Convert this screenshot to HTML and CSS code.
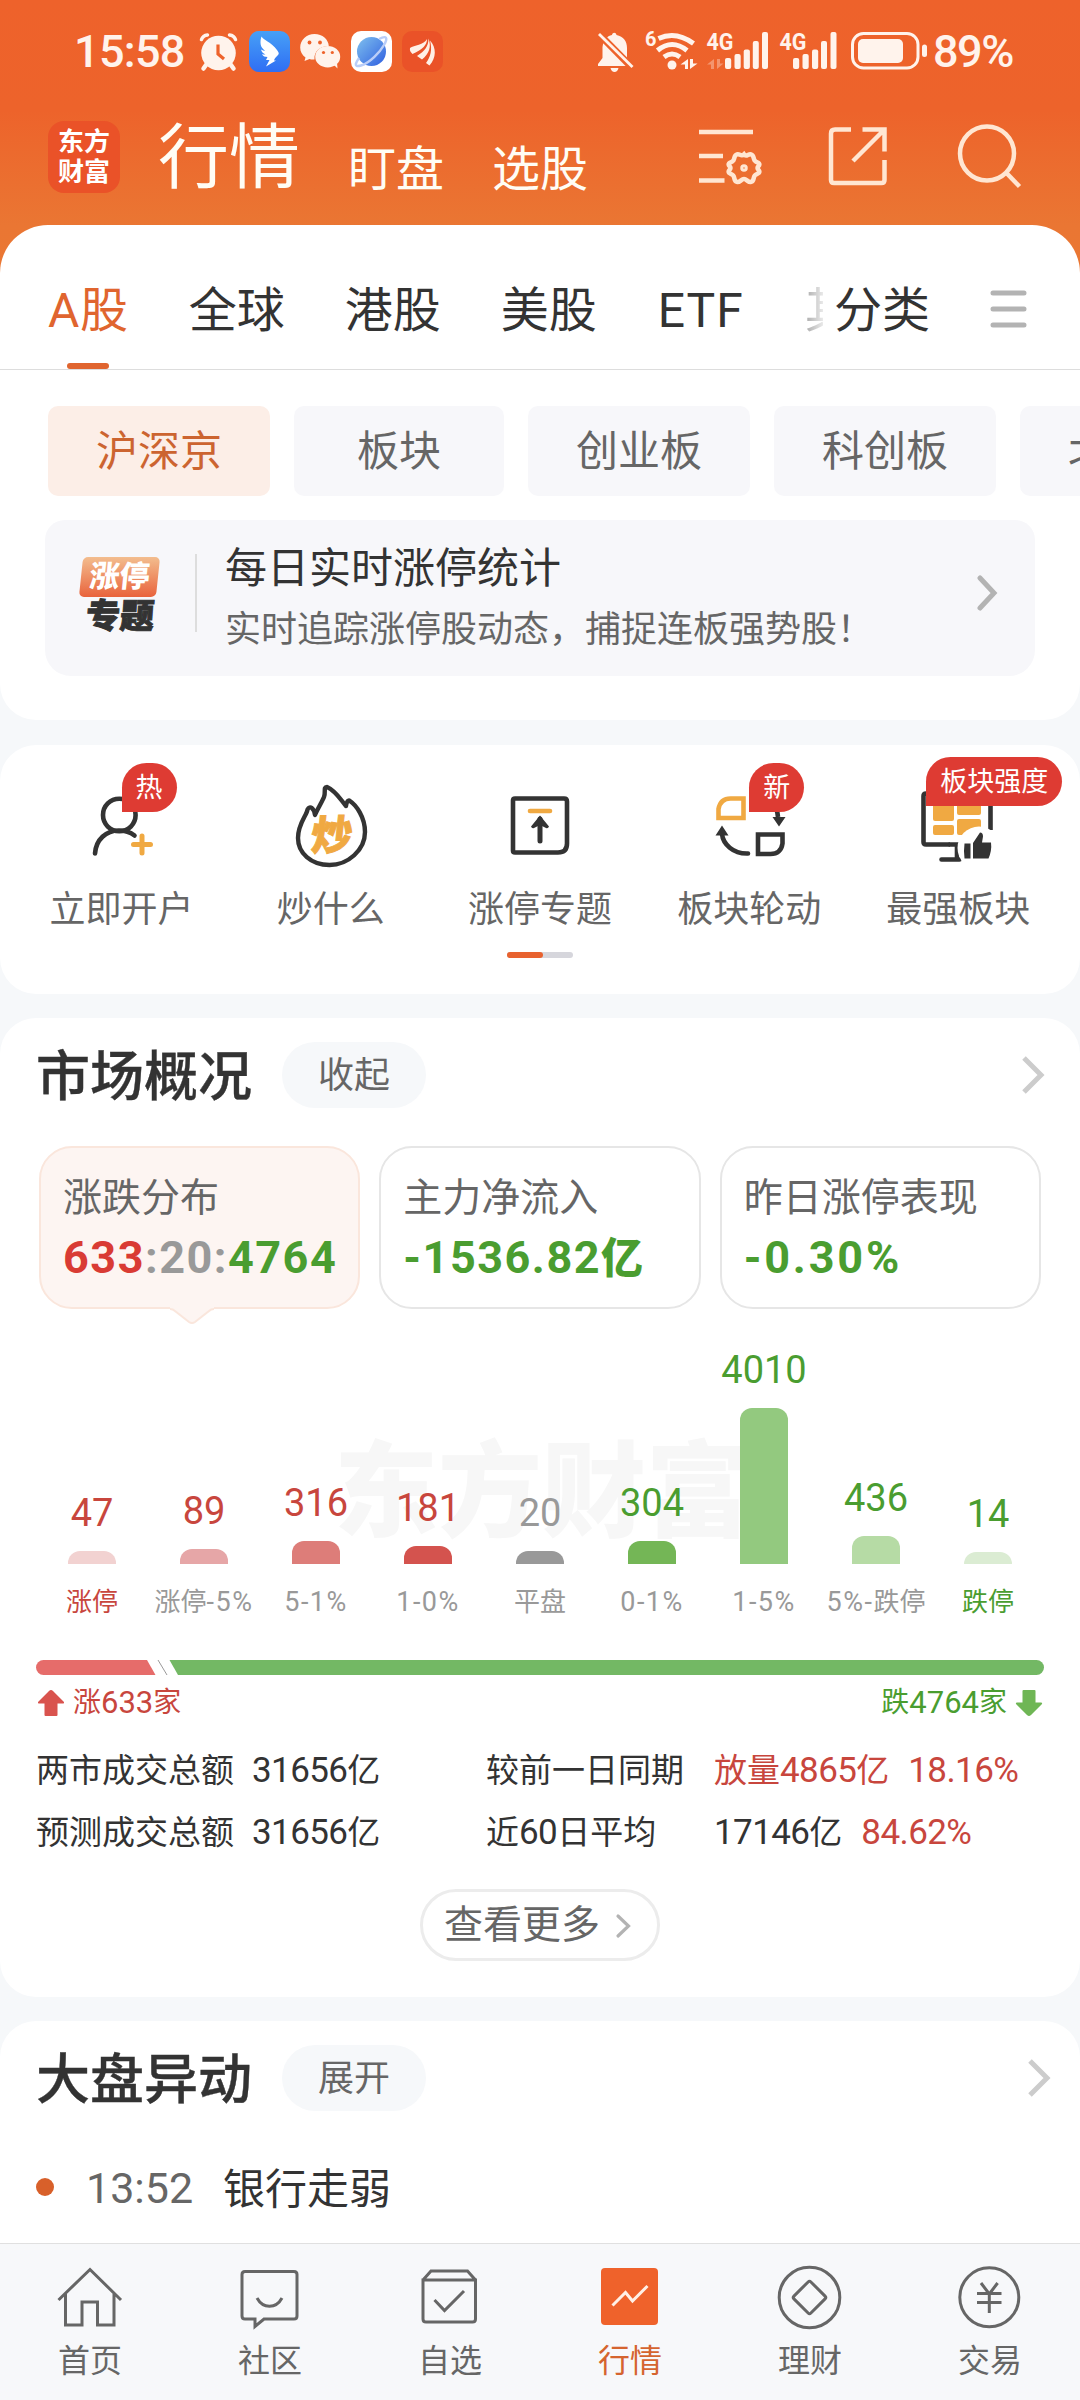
FILE: index.html
```html
<!DOCTYPE html>
<html lang="zh-CN">
<head>
<meta charset="utf-8">
<title>行情</title>
<link rel="stylesheet" href="styles.css">
</head>
<body>
<div class="page">
  <div class="status">
    <span class="clock">15:58</span>
    <div class="status-apps">
      <svg width="40" height="42" viewBox="199 31 40 42"><g stroke="#fff3ec" fill="none" stroke-linecap="round"><path d="M201.500 39.500q1.500-4 6-4.500M235.500 39.500q-1.500-4-6-4.500" stroke-width="3.500"/><path d="M206 65l-2.500 3.500M231 65l2.500 3.500" stroke-width="4.500"/></g><circle cx="218.500" cy="53" r="17.300" fill="#fff3ec"/><path d="M218 44.500v9.500l6 5" stroke="#ee622b" stroke-width="3.200" fill="none"/></svg>
      <svg width="41" height="41" viewBox="0 0 41 41"><defs><linearGradient id="ding" x2="0" y2="1"><stop stop-color="#47a0f6"/><stop offset="1" stop-color="#2f6ef4"/></linearGradient></defs><rect width="41" height="41" rx="10" fill="url(#ding)"/><path fill="#fff" d="M12.500 5.500c1 3 10 5.500 15.500 13.500 1.500 2.200 2.500 3.500 1 5-2 2-3.500 3.500-4 5.500h2L17 35.500l3.500-6.500h-3.500l1.500-3c-2.500 0-4.500-.6-5.500-3 1.500.8 3 .6 3.500.5-2.500-1-4-2.700-4.500-5 1.500 1 2.800 1.300 4 1.300-2.400-2-4-4-4.300-6.300-.4-2.500-.2-5.500.8-8z"/></svg>
      <svg width="41" height="41" viewBox="301 31 41 41"><path fill="#fff3ec" d="M315.500 34c8 0 14 5.500 14.300 12-9 0-15 5.500-14.300 13.500-2 .2-3.500 0-5-.5l-5 2 1-3.500c-3.500-2.500-5.300-6-5.300-10 0-7.500 6.300-13.500 14.300-13.500z"/><ellipse cx="328.700" cy="56.700" rx="12.500" ry="10.800" fill="#fff3ec"/><path d="M335 65l3.500 3.500-.5-6z" fill="#fff3ec"/><g fill="#ee622b"><circle cx="310.500" cy="42.500" r="1.900"/><circle cx="321" cy="42.500" r="1.900"/><circle cx="324.500" cy="52.500" r="1.600"/><circle cx="333.300" cy="52.500" r="1.600"/></g></svg>
      <svg width="41" height="41" viewBox="0 0 41 41"><defs><linearGradient id="globe" x2="1" y2="1"><stop stop-color="#7fc0ee"/><stop offset="1" stop-color="#2f5fe0"/></linearGradient></defs><rect width="41" height="41" rx="10" fill="#fff"/><circle cx="20.500" cy="20.500" r="14.500" fill="url(#globe)"/><path d="M28 8c8-4 9-1 5 6S19 32 10 34.500 6 30 8 27" fill="none" stroke="#b9cdf8" stroke-width="2.500"/></svg>
      <svg width="41" height="41" viewBox="0 0 41 41"><rect width="41" height="41" rx="10" fill="#ea5228"/><g fill="#fff0e6"><path d="M8 17c4-3 14-3 17-9 0 6-4 10-14.500 15C8.500 21 7.500 19.500 8 17z"/><path d="M15 25c8-5 11.500-10 11.500-17.500 3 8 1 15-6.500 21z"/><path d="M24 32c4.500-6 6.500-13 4-22.500 6.500 7 6.500 17-.5 25z"/></g></svg>
    </div>
    <div class="status-right">
      <svg width="330" height="56" viewBox="597 24 330 56">
        <g fill="#fff3ec">
          <path d="M602.500 47c1-7 4.500-11 9.500-12 .5-3 4-3 4.500 0 7 1.500 10.500 6 10.500 13v10l5 6v2h-34v-2l4.500-6z"/><path d="M610.500 68h8q-1 4-4 4t-4-4z"/>
          <circle cx="672" cy="65" r="4.500"/>
          <text x="645" y="46" font-size="20" font-weight="700">6</text>
          <text x="706.500" y="50" font-size="24" font-weight="700" textLength="27" lengthAdjust="spacingAndGlyphs">4G</text>
          <text x="779.500" y="50" font-size="24" font-weight="700" textLength="27" lengthAdjust="spacingAndGlyphs">4G</text>
          <path d="M688 59v10h-3V64.500h-4.500zM690 69V59h3v4.500h4.500z"/>
          <path d="M714 59v10h-3V64.500h-4zM717 69V59h3v4.500h3.500z" opacity=".35"/>
          <rect x="725" y="58" width="6.200" height="11" rx="2"/><rect x="734.500" y="54" width="6.200" height="15" rx="2"/><rect x="743.700" y="49.500" width="6.200" height="19.500" rx="2"/><rect x="752.800" y="41" width="6" height="28" rx="2"/><rect x="762" y="32" width="6" height="37" rx="2"/>
          <rect x="793" y="58" width="6.200" height="11" rx="2"/><rect x="802.500" y="54" width="6.200" height="15" rx="2"/><rect x="812" y="49.500" width="6.200" height="19.500" rx="2"/><rect x="821" y="41" width="6" height="28" rx="2"/><rect x="830.500" y="32" width="6" height="37" rx="2"/>
          <rect x="858" y="39" width="45" height="24" rx="5"/><rect x="922" y="44.500" width="5" height="12.500" rx="2.500"/>
        </g>
        <path d="M598 33l34 34.500" stroke="#ee622b" stroke-width="7"/><path d="M599 34l33.500 33" stroke="#fff3ec" stroke-width="2.800"/>
        <g fill="none" stroke="#fff3ec" stroke-width="5"><path d="M658.500 38.500q17.500-8 35 5"/><path d="M657.500 50.500q14.500-12 29.500 0"/><path d="M664 57q8-6 16 0"/></g>
        <rect x="852.500" y="33.500" width="65.500" height="34.500" rx="11" fill="none" stroke="#fff3ec" stroke-width="3"/>
      </svg>
      <span class="clock battery">89%</span>
    </div>
  </div>

  <header class="header">
    <div class="brand"><span>东方</span><span>财富</span></div>
    <nav class="modes"><b class="mode-main">行情</b><span>盯盘</span><span>选股</span></nav>
    <div class="tools">
      <svg width="56" height="62" viewBox="698 126 56 62" class="tool settings"><path d="M699 133h54M699 157h24M699 181.500h25.500"/><path d="M744 155.300c2.500 3.500 4-.8 7 0 3.300 1 2 4 3.700 6.300 1.500 2.300 4.700 1.300 4.700 4 0 1.700-1.900 1.700-1.900 3.400s1.900 2 1.900 3.600c0 2.700-3.200 1.700-4.700 4-1.700 2.300-.4 5.300-3.700 6.300-2.800.8-4.200-2.800-7-2.800s-4.200 3.600-7 2.800c-3.300-1-2-4-3.700-6.300-1.500-2.300-4.700-1.300-4.700-4 0-1.600 1.900-1.900 1.900-3.600s-1.900-1.700-1.900-3.400c0-2.700 3.200-1.700 4.700-4 1.700-2.300.4-5.300 3.700-6.300 2.800-.8 4.200 2.800 7 0z"/><circle cx="744" cy="169" r="1.500"/></svg>
      <svg width="60" height="62" viewBox="827 126 60 62" class="tool"><path d="M851 130.500h-16q-4 0-4 4v46.500q0 3 3 3h47.500q3 0 3-3V161M862.500 130.500H884.500V152.500M884.500 130.500L853 162"/></svg>
      <svg width="66" height="68" viewBox="957 123 66 68" class="tool"><circle cx="987" cy="154.500" r="27"/><path d="M1005.500 173l14 14.500"/></svg>
    </div>
  </header>

  <section class="panel">
    <nav class="tabs">
      <span class="tab active">A股</span><span class="tab">全球</span><span class="tab">港股</span><span class="tab">美股</span><span class="tab etf">ETF</span><span class="tab cut">其</span><span class="tab sort">分类</span>
      <svg class="menu" width="38" height="38" viewBox="0 0 38 38"><path d="M3 3h31M3 19h31M3 35h31" stroke="#b3b3b3" stroke-width="5" stroke-linecap="round"/></svg>
    </nav>
    <div class="chips"><span class="chip on">沪深京</span><span class="chip">板块</span><span class="chip">创业板</span><span class="chip">科创板</span><span class="chip">北交所</span></div>
    <div class="banner">
      <div class="topic"><span class="topic-top">涨停</span><span class="topic-bottom">专题</span></div>
      <div class="banner-text"><div class="banner-title">每日实时涨停统计</div><div class="banner-sub">实时追踪涨停股动态，捕捉连板强势股！</div></div>
      <svg class="banner-arrow" width="22" height="36" viewBox="0 0 22 36"><path d="M3 3l14 15L3 33" class="chev grey"/></svg>
    </div>
  </section>

  <section class="card quick">
    <div class="quick-grid">
      <div class="quick-item"><div class="quick-icon">
        <svg width="90" height="90" viewBox="76 781 90 90"><g fill="none" stroke="#333" stroke-width="4.600" stroke-linecap="round"><circle cx="118.300" cy="815" r="16.300"/><path d="M94 853.500c1-14 11-23 24-23 6 0 11 1.500 15.500 5"/></g><path d="M132.500 844.500h17M141 836v17" stroke="#f0a942" stroke-width="5" stroke-linecap="round"/></svg>
        <span class="badge">热</span></div><span>立即开户</span></div>
      <div class="quick-item"><div class="quick-icon">
        <svg width="90" height="90" viewBox="285 781 90 90"><path d="M314 815c-1-7-5-10-7.500-5.500-.7 6-9.500 14-9.500 28.500 0 15 13 27 31.500 27S364 850 364 832c0-15-9-27-15-31-2-1.500-3.500 1-4 5-6-7-10-15-19-19-4 0-1 5-3 10s-6 11-9 18z" fill="none" stroke="#333" stroke-width="4.400" stroke-linejoin="round"/><text class="flame-text" x="309" y="850" transform="skewX(-6) translate(89 0)">炒</text></svg></div><span>炒什么</span></div>
      <div class="quick-item"><div class="quick-icon">
        <svg width="90" height="90" viewBox="495 781 90 90"><path d="M515 798.500h49q3 0 3 3v42q0 9-9 9h-43q-2 0-2-2v-50q0-2 2-2z" fill="none" stroke="#333" stroke-width="4.600"/><path d="M530 811h20" stroke="#f0a942" stroke-width="4.600" stroke-linecap="round"/><path d="M540 841v-22" stroke="#333" stroke-width="5" stroke-linecap="round"/><path d="M540 815.500l9 11q-1 2.500-3 1.500l-6-3-6 3q-2 1-3-1.500z" fill="#333"/></svg></div><span>涨停专题</span></div>
      <div class="quick-item"><div class="quick-icon">
        <svg width="90" height="90" viewBox="704 781 90 90"><g fill="none" stroke="#333" stroke-width="4.600"><path d="M718.500 818V809q2-10.500 12-10.500h13V818z" stroke="#f0a942"/><path d="M758 834.500h24.500v9q-1.500 10.500-12 10.500H758z"/><path d="M722 834c1 10 11 20 26 19.500" stroke-linecap="round"/><path d="M771 800q6.500 8 7 17"/></g><path d="M722 825.500l6.500 10h-13zM779 826.500l6.500-9.500h-13z" fill="#333"/></svg>
        <span class="badge">新</span></div><span>板块轮动</span></div>
      <div class="quick-item"><div class="quick-icon">
        <svg width="90" height="90" viewBox="913 781 90 90"><g fill="none" stroke="#333" stroke-width="4.600"><path d="M950 844.500h-24q-2.500 0-2.500-2.500v-46q0-2.500 2.500-2.500h62q2.500 0 2.500 2.500v34"/><path d="M950 844.500h8M957 845v12M941.500 859.500h18" stroke-linecap="round"/></g><g fill="#f0a942"><rect x="933" y="800" width="21" height="21" rx="2"/><rect x="957" y="800" width="24" height="15" rx="2"/><rect x="933" y="825" width="21" height="10" rx="2"/><rect x="957" y="819" width="24" height="16" rx="2"/></g><circle cx="979" cy="848" r="21.500" fill="#fff"/><path fill="#333" d="M964.500 843.500h6v15h-6q-1-8 0-15zM973 843l7-10.500q3 0 3 4l-1 6h9q1 8-2.500 16H973z"/></svg>
        <span class="badge wide">板块强度</span></div><span>最强板块</span></div>
    </div>
    <div class="pager"><i></i></div>
  </section>

  <section class="card market">
    <div class="head"><h2>市场概况</h2><span class="pill">收起</span><svg width="26" height="42" viewBox="0 0 26 42"><path d="M4 4l17 17L4 38" class="chev light"/></svg></div>
    <div class="stats">
      <div class="stat selected"><span class="stat-label">涨跌分布</span><span class="stat-value"><em class="red">633</em><em class="gray">:20:</em><em>4764</em></span><svg class="pointer" width="44" height="18" viewBox="0 0 44 18"><path d="M0 0h44v2q-3 0-5 2L25 15q-3 2-6 0L5 4Q3 2 0 2z" fill="#fdf5f2"/><path d="M0 2q3 0 5 2l14 11q3 2 6 0L39 4q2-2 5-2" fill="none" stroke="#fae6dc" stroke-width="2"/></svg></div>
      <div class="stat"><span class="stat-label">主力净流入</span><span class="stat-value">-1536.82<b>亿</b></span></div>
      <div class="stat"><span class="stat-label">昨日涨停表现</span><span class="stat-value loose">-0.30%</span></div>
    </div>
    <div class="chart">
      <div class="watermark">东方财富</div>
      <div class="col red"><span class="n">47</span><i style="height:13px;background:#f2d2d1"></i><span class="l on">涨停</span></div>
      <div class="col red"><span class="n">89</span><i style="height:15px;background:#e6a6a7"></i><span class="l">涨停<u>-5%</u></span></div>
      <div class="col red"><span class="n">316</span><i style="height:23px;background:#dd7d79"></i><span class="l"><u>5-1%</u></span></div>
      <div class="col red"><span class="n">181</span><i style="height:18px;background:#d4534e"></i><span class="l"><u>1-0%</u></span></div>
      <div class="col gray"><span class="n">20</span><i style="height:13px;background:#999"></i><span class="l">平盘</span></div>
      <div class="col green"><span class="n">304</span><i style="height:23px;background:#74b656"></i><span class="l"><u>0-1%</u></span></div>
      <div class="col green"><span class="n">4010</span><i style="height:156px;background:#93c97f"></i><span class="l"><u>1-5%</u></span></div>
      <div class="col green"><span class="n">436</span><i style="height:28px;background:#b6dba5"></i><span class="l"><u>5%-</u>跌停</span></div>
      <div class="col green"><span class="n">14</span><i style="height:12px;background:#dbecd3"></i><span class="l on">跌停</span></div>
    </div>
    <svg class="ratio" width="1008" height="15" viewBox="36 0 1008 15"><path d="M43.500 0H147l8.500 15h-112a7.500 7.500 0 0 1 0-15z" fill="#e66c6a"/><path d="M158 0l9 15" stroke="#999" stroke-width="1"/><path d="M169.500 0H1036.500a7.500 7.500 0 0 1 0 15H178z" fill="#73b864"/></svg>
    <div class="ratio-text">
      <span class="up"><svg width="28" height="28" viewBox="0 0 28 28"><path d="M14 1q1 0 2 1l11 11q.5 1.500-1 1.500h-5.500V26q0 1-1 1h-11q-1 0-1-1V14.500H2q-1.500 0-1-1.500L12 2q1-1 2-1z" fill="#d9534e"/></svg>涨<em>633</em>家</span>
      <span class="down">跌<em>4764</em>家<svg width="28" height="28" viewBox="0 0 28 28"><path d="M14 27q-1 0-2-1L1 15q-.5-1.500 1-1.500h5.500V2q0-1 1-1h11q1 0 1 1v11.500H26q1.500 0 1 1.500L16 26q-1 1-2 1z" fill="#6fb655"/></svg></span>
    </div>
    <div class="totals">
      <span>两市成交总额</span><span><em>31656</em>亿</span><span>较前一日同期</span><span class="red">放量<em>4865</em>亿<em class="pct">18.16%</em></span>
      <span>预测成交总额</span><span><em>31656</em>亿</span><span>近<em>60</em>日平均</span><span><em>17146</em>亿<em class="pct red">84.62%</em></span>
    </div>
    <div class="more">查看更多<svg width="18" height="28" viewBox="0 0 18 28"><path d="M3 4l10.500 10L3 24" fill="none" stroke="#b3b3b3" stroke-width="3.200" stroke-linecap="round"/></svg></div>
  </section>

  <section class="card moves">
    <div class="head"><h2>大盘异动</h2><span class="pill">展开</span><svg width="26" height="42" viewBox="0 0 26 42"><path d="M4 4l17 17L4 38" class="chev light"/></svg></div>
    <div class="move"><i></i><time>13:52</time><span>银行走弱</span></div>
  </section>

  <footer class="tabbar">
    <div class="nav"><svg width="70" height="68" viewBox="55 2264 70 68"><path d="M58.500 2300L90 2269.500l31 30.500M65.500 2294v31h16.500v-23h15.500v23h16.500v-31"/></svg><span>首页</span></div>
    <div class="nav"><svg width="70" height="68" viewBox="235 2264 70 68"><path d="M245 2271.500h49q3 0 3 3V2316q0 3-3 3h-30l-9 7.500v-7.500h-10q-3 0-3-3v-41.500q0-3 3-3zM257 2298c6 11 19 11 25 0"/></svg><span>社区</span></div>
    <div class="nav"><svg width="70" height="68" viewBox="415 2264 70 68"><path d="M423 2280h52.500v39q0 3-3 3H426q-3 0-3-3zM423 2280l8-9h36.500l8 9M434.500 2300l10 10.500L464 2291"/></svg><span>自选</span></div>
    <div class="nav active"><svg width="70" height="68" viewBox="595 2264 70 68"><rect x="601" y="2268" width="57" height="57" rx="4" fill="#ef622b" stroke="none"/><path d="M612.500 2305.500l13-13 7 8.500 15-15" stroke="#fff0e6" stroke-width="3"/></svg><span>行情</span></div>
    <div class="nav"><svg width="70" height="68" viewBox="775 2264 70 68"><circle cx="809.500" cy="2297.500" r="30.300"/><rect x="797.500" y="2285.500" width="24" height="24" rx="2" transform="rotate(45 809.500 2297.500)"/></svg><span>理财</span></div>
    <div class="nav"><svg width="70" height="68" viewBox="955 2264 70 68"><circle cx="989.300" cy="2297.300" r="29.500"/><path d="M981 2283l8.300 11 8.300-11M977 2293.500h24.500M977 2302.500h24.500M989.300 2293v20"/></svg><span>交易</span></div>
  </footer>
</div>
</body>
</html>
```
FILE: styles.css
```css
* { box-sizing: border-box; }
body { margin: 0; font-family: Roboto, "Noto Sans CJK SC", sans-serif; color: #333; }
em, i, u { font-style: normal; text-decoration: none; }
svg { display: block; flex: none; }
svg text { font-family: Roboto, sans-serif; }
svg .flame-text { font-family: "Noto Sans CJK SC", sans-serif; font-size: 41px; font-weight: 900; fill: #f0a942; stroke: #f0a942; stroke-width: 1px; }

.page {
  width: 1080px; height: 2400px; overflow: hidden;
  display: flex; flex-direction: column;
  background: linear-gradient(#ee622b 0, #ed632b 110px, #ea7633 225px, #ea7833 300px, #f6f8fa 300px);
}

.status { height: 103px; padding: 0 68px 0 74px; display: flex; align-items: center; color: #fff3ec; }
.clock { font-size: 45px; font-weight: 500; line-height: 50px; width: 125px; letter-spacing: -.7px; }
.status-apps { display: flex; align-items: center; gap: 10px; }
.status-right { margin-left: auto; display: flex; align-items: center; gap: 6px; }
.battery { width: 79px; letter-spacing: -1.500px; }

.header { height: 122px; padding: 18px 57px 0 48px; display: flex; align-items: flex-start; color: #fffdf5; }
.brand { width: 72px; height: 72px; border-radius: 16px; background: #ea5228; color: #fff; display: flex; flex-direction: column; align-items: center; justify-content: center; }
.brand span { font-size: 26px; line-height: 30px; font-weight: 700; }
.modes { display: flex; align-items: flex-start; gap: 48px; margin-left: 38px; font-size: 48px; line-height: 72px; }
.modes span { padding-top: 13px; }
.mode-main { font-size: 71px; font-weight: 400; padding-top: 1px; }
.tools { margin-left: auto; display: flex; align-items: center; gap: 70px; padding-top: 1px; }
.tool { fill: none; stroke: #ffe6d2; stroke-width: 4.500; overflow: visible; }
.settings { margin-right: 3px; }

.panel { flex: none; height: 495px; background: #fff; border-radius: 48px 48px 36px 36px; box-shadow: 0 60px 0 #f6f8fa; }
.tabs { height: 145px; border-bottom: 1px solid #ddd; display: flex; align-items: center; padding: 27px 52px 0 48px; font-size: 48px; line-height: 56px; }
.tab { margin-right: 60px; white-space: nowrap; }
.tab.active { position: relative; color: #e0652f; letter-spacing: .7px; }
.tab.active::after { content: ""; position: absolute; left: 19px; bottom: -30px; width: 42px; height: 6px; border-radius: 3px; background: #e0652f; }
.tab.etf { margin: 0 61px 0 1px; letter-spacing: 1px; }
.tab.cut { width: 19px; overflow: hidden; margin-right: 11px; color: #aaa; -webkit-mask-image: linear-gradient(90deg, #000, rgba(0,0,0,.25)); mask-image: linear-gradient(90deg, #000, rgba(0,0,0,.25)); }
.menu { margin: -4px 0 0 auto; }
.chips { display: flex; gap: 24px; padding: 36px 0 0 48px; overflow: hidden; }
.chip { flex: none; min-width: 210px; height: 90px; padding: 1px 48px 0; border-radius: 10px; background: #f7f7fa; color: #666; font-size: 42px; line-height: 90px; text-align: center; }
.chip.on { background: #fceee7; color: #cc6430; }
.banner { margin: 24px 45px 0; height: 156px; border-radius: 20px 20px 26px 26px; background: #f7f7fa; display: flex; align-items: center; padding: 0 36px 0 34px; }
.topic { width: 81px; height: 76px; margin-bottom: 7px; display: flex; flex-direction: column; align-items: center; }
.topic-top { width: 77px; height: 41px; border-radius: 5px; background: linear-gradient(#f3bd8e, #e9633c); color: #fff; font-size: 30px; line-height: 40px; font-weight: 900; text-align: center; transform: skewX(-6deg); }
.topic-bottom { font-size: 34px; line-height: 38px; font-weight: 900; transform: skewX(-4deg); -webkit-text-stroke: 1px #333; }
.banner-text { margin-left: 35px; padding: 2px 0 0 30px; flex: 1; position: relative; }
.banner-text::before { content: ""; position: absolute; left: 0; top: 18px; width: 2px; height: 78px; background: #ddd; }
.banner-title { font-size: 42px; line-height: 62px; }
.banner-sub { font-size: 36px; line-height: 60px; color: #666; }
.banner-arrow { margin-bottom: 10px; }
.chev { fill: none; stroke-width: 5; }
.chev.grey { stroke: #b3b3b3; stroke-linecap: round; }
.chev.light { stroke: #ccc; }

.card { flex: none; background: #fff; border-radius: 36px; }
.quick { margin-top: 25px; height: 249px; padding: 36px 17px 0; position: relative; }
.quick-grid { display: grid; grid-template-columns: repeat(5, 209.200px); }
.quick-item { display: flex; flex-direction: column; align-items: center; font-size: 36px; line-height: 50px; color: #666; }
.quick-icon { position: relative; width: 90px; height: 104px; }
.badge { position: absolute; left: 45px; top: -18px; height: 49px; min-width: 55px; padding: 0 14px; border-radius: 25px 25px 25px 0; background: #de3b33; color: #fff; font-size: 27px; line-height: 51px; white-space: nowrap; }
.badge.wide { left: 13px; top: -24px; }
.pager { width: 66px; height: 6px; border-radius: 3px; background: #d6d6dc; margin: 17px auto 0; }
.pager i { display: block; width: 36px; height: 6px; border-radius: 3px; background: #e8622f; }

.market { margin-top: 24px; height: 979px; }
.head { display: flex; align-items: center; padding: 24px 34px 0 36px; height: 90px; }
h2 { margin: 0; padding-top: 5px; font-size: 54px; line-height: 66px; font-weight: 500; width: 246px; -webkit-text-stroke: .4px #333; }
.pill { width: 144px; height: 66px; border-radius: 33px; background: #f6f8fa; text-align: center; font-size: 36px; line-height: 69px; color: #666; }
.head svg { margin-left: auto; }
.stats { display: flex; gap: 19px; margin: 38px 39px 0; }
.stat { position: relative; flex: 1; height: 163px; border: 2px solid #e6e6e6; border-radius: 33px; padding: 24px 0 0 22px; display: flex; flex-direction: column; }
.stat.selected { background: #fdf5f2; border-color: #fae6dc; }
.stat-label { font-size: 39px; line-height: 52px; color: #666; }
.stat-value { margin-top: 1px; font-size: 45px; line-height: 66px; font-weight: 700; color: #4a9d30; white-space: nowrap; letter-spacing: 1.500px; }
.stat-value.loose { letter-spacing: 2.800px; }
.stat-value b { font-size: 42px; }
.pointer { position: absolute; left: 129px; top: 159px; }
.red, .stat-value .red { color: #c8463d; }
.stat-value .red { color: #d93b34; }
.gray, .stat-value .gray { color: #999; }
.green { color: #4a9d30; }

.chart { position: relative; height: 255px; margin: 38px 36px 0; display: grid; grid-template-columns: repeat(9, 112px); align-items: end; }
.watermark { position: absolute; left: 298px; top: 87px; font-size: 104px; line-height: 120px; font-weight: 900; color: #f7f7f7; }
.col { position: relative; display: flex; flex-direction: column; align-items: center; }
.col i { width: 48px; border-radius: 12px 12px 0 0; margin-top: 15px; }
.n { font-size: 38px; line-height: 46px; }
.l { margin-top: 20px; font-size: 26px; line-height: 36px; color: #999; white-space: nowrap; }
.l u { letter-spacing: 1.500px; font-size: 27px; }
.l.on { color: inherit; }
.ratio { margin: 58px 36px 0; }
.ratio-text { display: flex; justify-content: space-between; padding: 9px 37px 0 37px; font-size: 28px; line-height: 38px; color: #c8463d; }
.ratio-text span { display: flex; align-items: center; }
.ratio-text em { font-size: 31px; }
.up svg { margin-right: 8px; }
.down { color: #4a9d30; }
.down svg { margin-left: 8px; }
.totals { display: grid; grid-template-columns: 216px 234px 228px auto; row-gap: 12px; margin: 24px 0 0 36px; font-size: 33px; line-height: 50px; white-space: nowrap; }
.totals em { font-size: 35px; letter-spacing: -.6px; }
.totals .pct { margin-left: 19px; }
.more { width: 240px; height: 72px; margin: 31px auto 0; border: 3px solid #ececec; border-radius: 36px; display: flex; align-items: center; padding: 1px 0 0 21px; font-size: 39px; line-height: 65px; color: #666; }
.more svg { margin-left: 15px; }

.moves { margin-top: 24px; height: 222px; border-radius: 36px 36px 0 0; }
.moves .head { padding-right: 28px; }
.move { display: flex; align-items: center; height: 60px; margin: 46px 0 0 36px; font-size: 42px; line-height: 60px; }
.move i { width: 18px; height: 18px; border-radius: 50%; background: #d8602a; }
.move time { margin-left: 32px; width: 137px; color: #666; font-size: 43px; padding-top: 1px; }
.move span { padding-top: 6px; }

.tabbar { flex: none; height: 157px; border-top: 1px solid #e0e0e0; background: #f7f8fa; display: grid; grid-template-columns: repeat(6, 180px); padding-top: 20px; }
.nav { display: flex; flex-direction: column; align-items: center; font-size: 32px; line-height: 50px; color: #666; }
.nav svg { fill: none; stroke: #666; stroke-width: 3; }
.nav span { margin-top: 4px; }
.nav.active { color: #d5642f; }
```
